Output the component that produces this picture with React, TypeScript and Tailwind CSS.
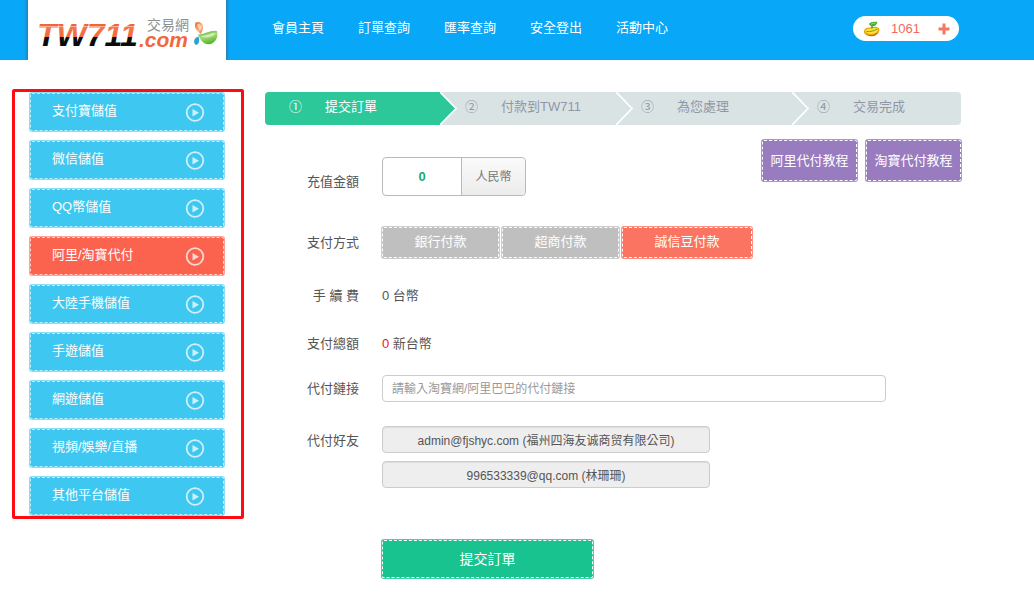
import type { ReactNode } from 'react';
import clsx from 'clsx';

const navLinks = ['會員主頁', '訂單查詢', '匯率查詢', '安全登出', '活動中心'];

const sideLinks = [
  '支付寶儲值',
  '微信儲值',
  'QQ幣儲值',
  '阿里/淘寶代付',
  '大陸手機儲值',
  '手遊儲值',
  '網遊儲值',
  '視頻/娛樂/直播',
  '其他平台儲值',
];

const steps = [
  { mark: '①', label: '提交訂單' },
  { mark: '②', label: '付款到TW711' },
  { mark: '③', label: '為您處理' },
  { mark: '④', label: '交易完成' },
];

const payMethods = [
  { label: '銀行付款', active: false },
  { label: '超商付款', active: false },
  { label: '誠信豆付款', active: true },
];

const friends = ['admin@fjshyc.com (福州四海友诚商贸有限公司)', '996533339@qq.com (林珊珊)'];

function Logo() {
  return (
    <svg viewBox="0 0 198 60" className="h-[60px] w-[198px]" role="img" aria-label="TW711.com">
      <defs>
        <linearGradient id="word" gradientUnits="userSpaceOnUse" x1="0" y1="22" x2="0" y2="47">
          <stop offset="0" stopColor="#ee5a2c" />
          <stop offset="0.14" stopColor="#f0673c" />
          <stop offset="0.17" stopColor="#fbcdbb" />
          <stop offset="0.2" stopColor="#f4774e" />
          <stop offset="0.6" stopColor="#f2683a" />
          <stop offset="0.62" stopColor="#0b0b0b" />
          <stop offset="1" stopColor="#0b0b0b" />
        </linearGradient>
        <linearGradient id="green" x1="0" y1="0" x2="0.4" y2="1">
          <stop offset="0" stopColor="#4fae2a" />
          <stop offset="0.5" stopColor="#a9dd78" />
          <stop offset="1" stopColor="#58b52f" />
        </linearGradient>
        <linearGradient id="orange" x1="0" y1="0" x2="1" y2="1">
          <stop offset="0" stopColor="#f0642c" />
          <stop offset="0.6" stopColor="#fbb98c" />
          <stop offset="1" stopColor="#ee6a24" />
        </linearGradient>
      </defs>
      <text x="9" y="46" fill="url(#word)" className="font-['Liberation_Sans',sans-serif] text-[32px] font-bold italic">
        TW711
      </text>
      <text x="111" y="47" fill="#f2683a" className="font-['Liberation_Sans',sans-serif] text-[21px] font-bold italic">
        .com
      </text>
      <text x="119" y="30" fill="#8f8f8f" className="font-['Noto_Sans_CJK_TC',sans-serif] text-[14px]">
        交易網
      </text>
      <path d="M167.500 22.500c3.500-1.500 7.500 0 7.500 4.500c0 2.500-1 4.500-2 7c-4-2.500-7.500-6.500-5.500-11.500z" fill="url(#orange)" />
      <path d="M169.500 24c2-.5 4 .8 4 3.200c0 1-.3 2-.8 3c-2-1.600-3.600-3.700-3.200-6.200z" fill="#fde3cd" opacity=".7" />
      <path d="M170 34.500c6 .5 11.500-4.500 19-3.500c2 6-2 13-8.500 13.300c-5 .2-8.500-4.800-10.500-9.800z" fill="url(#green)" />
      <path d="M172.500 36c5 .5 10-3 15-3.200c-2 4.700-9 6-15 3.200z" fill="#e2f5cf" opacity=".7" />
      <path d="M170.500 36.500c1.200 3 1 7-2 8.500c-3.500-1-3.500-7 2-8.500z" fill="#2f9ed2" />
    </svg>
  );
}

function BeanIcon() {
  return (
    <svg viewBox="0 0 18 18" className="h-[18px] w-[18px]" aria-hidden="true">
      <path d="M1.500 9.500c1.500-2 4-1.500 6.500-2.200c3-1 6.800-.8 8.200 1.200c1.200 3-2 6.800-7.200 7.300C4.500 16.300 1 14.500 1 12C1 11 1.200 10.100 1.500 9.500z" fill="#e9a70d" />
      <path d="M2.500 10c1.500-1.500 4.500-1 6.500-1.700c2.500-.7 5-.3 6 1c.5 2.500-3 4.600-6.500 4.700S2 13 2.500 10z" fill="#fbe234" />
      <path d="M3 14.300c3 1.500 9 1.100 12.500-2.800c-.5 3-4 5-8 4.700C5.500 16 4 15.400 3 14.300z" fill="#c96f12" />
      <path d="M3.500 11.500c3.500.8 7.500-1 11-2.300" stroke="#6d9c15" strokeWidth="0.900" fill="none" />
      <path d="M6 4C7.500 2 10 1.500 14.500 2c-.8 2.800-2.500 4.200-5 4.200c-1.500 0-2.700-.7-3.500-2.200z" fill="#3fae2a" />
      <path d="M8 4.300c1.500-.8 3-1.200 4.500-1.300" stroke="#a3e06a" strokeWidth="0.900" fill="none" />
      <path d="M9 5.500v3" stroke="#3b8d22" strokeWidth="1.200" />
    </svg>
  );
}

function PlayIcon() {
  return (
    <svg viewBox="0 0 20 20" className="h-5 w-5 text-white/75" aria-hidden="true">
      <circle cx="10" cy="10.500" r="8.300" fill="none" stroke="currentColor" strokeWidth="1.800" />
      <path d="M7.500 7v7.500l6.500-3.700z" fill="currentColor" />
    </svg>
  );
}

function Chevron({ className }: { className: string }) {
  return (
    <svg viewBox="0 0 18 33" className={clsx('absolute top-0 left-full z-10 -ml-px h-full w-[18px]', className)} aria-hidden="true">
      <path d="M0 0l16 16.500L0 33z" fill="currentColor" />
      <path d="M0 0l16 16.500L0 33" fill="none" stroke="#fff" strokeWidth="1.700" />
    </svg>
  );
}

type FieldProps = {
  label: string;
  htmlFor?: string;
  className?: string;
  labelClassName?: string;
  children: ReactNode;
};

function Field({ label, htmlFor, className, labelClassName, children }: FieldProps) {
  return (
    <div className={clsx('flex gap-[23px]', className)}>
      <label htmlFor={htmlFor} className={clsx('w-[94px] shrink-0 text-right leading-5', labelClassName)}>
        {label}
      </label>
      {children}
    </div>
  );
}

export default function App() {
  return (
    <div className="min-h-screen bg-white font-['Liberation_Sans','Noto_Sans_CJK_TC',sans-serif] text-[13px] text-[#555]">
      <header className="flex h-[60px] bg-[#08a7f8] text-white">
        <a href="#" className="ml-7 bg-white shadow-[0_0_3px_1px_#38709a] [clip-path:inset(0_-4px)]">
          <Logo />
        </a>
        <nav className="ml-[46px] flex items-center gap-[34px] pb-1">
          {navLinks.map((text) => (
            <a key={text} href="#" className="leading-5 whitespace-nowrap">
              {text}
            </a>
          ))}
        </nav>
        <div className="mt-4 mr-[75px] ml-auto flex h-[25px] w-[106px] items-center rounded-full bg-white pr-2 pl-[10px] text-[#f4695a]">
          <BeanIcon />
          <span className="ml-[10px]">1061</span>
          <button type="button" aria-label="+" className="ml-auto">
            <svg viewBox="0 0 14 14" className="h-[14px] w-[14px]" aria-hidden="true">
              <path d="M1.500 7h11M7 1.500v11" stroke="#fa7462" strokeWidth="3" />
            </svg>
          </button>
        </div>
      </header>

      <div className="flex items-start">
        <aside className="mt-[29px] ml-3 w-[232px] shrink-0 rounded-xs border-3 border-[#fb0d12]">
          <ul className="my-px mr-[17px] ml-[15px] flex flex-col gap-[10px]">
            {sideLinks.map((text) => (
              <li key={text}>
                <a
                  href="#"
                  className={clsx(
                    'flex h-[38px] items-center justify-between rounded-xs border border-dashed border-white/70 pr-[18px] pl-[21px] text-white ring-1',
                    text === '阿里/淘寶代付' ? 'bg-[#fb634f] ring-[#fb634f]/60' : 'bg-[#3ec7f0] ring-[#3ec7f0]/60',
                  )}
                >
                  <span className="pb-[3px] leading-5">{text}</span>
                  <PlayIcon />
                </a>
              </li>
            ))}
          </ul>
        </aside>

        <main className="mt-8 mr-[73px] ml-[21px] min-w-0 flex-1">
          <ol className="grid h-[33px] grid-cols-[repeat(3,1fr)_168px] overflow-hidden rounded-sm bg-[#dae3e4] text-[#8f97a6]">
            {steps.map((step, i) => (
              <li key={step.mark} className={clsx('relative flex items-center pb-[3px] pl-6 leading-5', i === 0 && 'bg-[#2dc89a] text-white')}>
                <span className="w-9">{step.mark}</span>
                <span>{step.label}</span>
                {i < steps.length - 1 && <Chevron className={i === 0 ? 'text-[#2dc89a]' : 'text-[#dae3e4]'} />}
              </li>
            ))}
          </ol>

          <form className="mb-6" onSubmit={(e) => e.preventDefault()}>
            <div className="mt-[15px] flex items-start justify-between">
              <Field label="充值金額" htmlFor="amount" className="mt-[17px] items-end" labelClassName="pb-1">
                <div className="flex h-[39px] w-36 rounded-sm border border-[#b9b9b9]">
                  <input
                    id="amount"
                    defaultValue="0"
                    className="w-[79px] rounded-l-sm border-r border-[#b9b9b9] text-center font-bold text-[#1ba978] outline-none"
                  />
                  <span className="flex flex-1 items-center justify-center rounded-r-sm bg-linear-to-b from-[#fafafa] to-[#ececec] text-xs text-[#777]">
                    人民幣
                  </span>
                </div>
              </Field>
              <div className="flex gap-[9px]">
                {['阿里代付教程', '淘寶代付教程'].map((text) => (
                  <button
                    key={text}
                    type="button"
                    className="h-[41px] w-[95px] rounded-xs border border-dashed border-white bg-[#997bbf] text-white ring-1 ring-[#997bbf]/80"
                  >
                    {text}
                  </button>
                ))}
              </div>
            </div>

            <Field label="支付方式" className="mt-[31px] items-center">
              <div className="flex gap-[3px]">
                {payMethods.map(({ label, active }) => (
                  <button
                    key={label}
                    type="button"
                    className={clsx(
                      'h-[31px] rounded-xs border border-dashed border-white pb-px text-white ring-1',
                      active ? 'w-[130px] bg-[#fb7462] ring-[#fb7462]/80' : 'w-[117px] bg-[#bfbfbf] ring-[#bfbfbf]/80',
                    )}
                  >
                    {label}
                  </button>
                ))}
              </div>
            </Field>

            <Field label="手 續 費" className="mt-7">
              <p className="leading-5">0 台幣</p>
            </Field>

            <Field label="支付總額" className="mt-7">
              <p className="leading-5">
                <span className="text-[#fb0d12]">0</span> 新台幣
              </p>
            </Field>

            <Field label="代付鏈接" htmlFor="link" className="mt-[21px] items-center">
              <input
                id="link"
                placeholder="請輸入淘寶網/阿里巴巴的代付鏈接"
                className="h-[27px] w-full max-w-[504px] rounded-sm border border-[#ccc] px-[9px] text-xs outline-none placeholder:text-[#999]"
              />
            </Field>

            <Field label="代付好友" htmlFor="friend-0" className="mt-6" labelClassName="pt-[5px]">
              <div className="flex w-[328px] flex-col gap-2">
                {friends.map((text, i) => (
                  <input
                    key={text}
                    id={`friend-${i}`}
                    aria-label={text}
                    readOnly
                    defaultValue={text}
                    className="h-[27px] rounded-sm border border-[#ccc] bg-[#eee] text-center text-xs shadow-[inset_0_1px_1px_rgba(0,0,0,0.075)] outline-none"
                  />
                ))}
              </div>
            </Field>

            <button
              type="submit"
              className="mt-[52px] ml-[117px] h-[38px] w-[211px] rounded-xs border border-dashed border-white bg-[#19c38f] text-sm text-white ring-1 ring-[#19c38f]/80"
            >
              提交訂單
            </button>
          </form>
        </main>
      </div>
    </div>
  );
}
